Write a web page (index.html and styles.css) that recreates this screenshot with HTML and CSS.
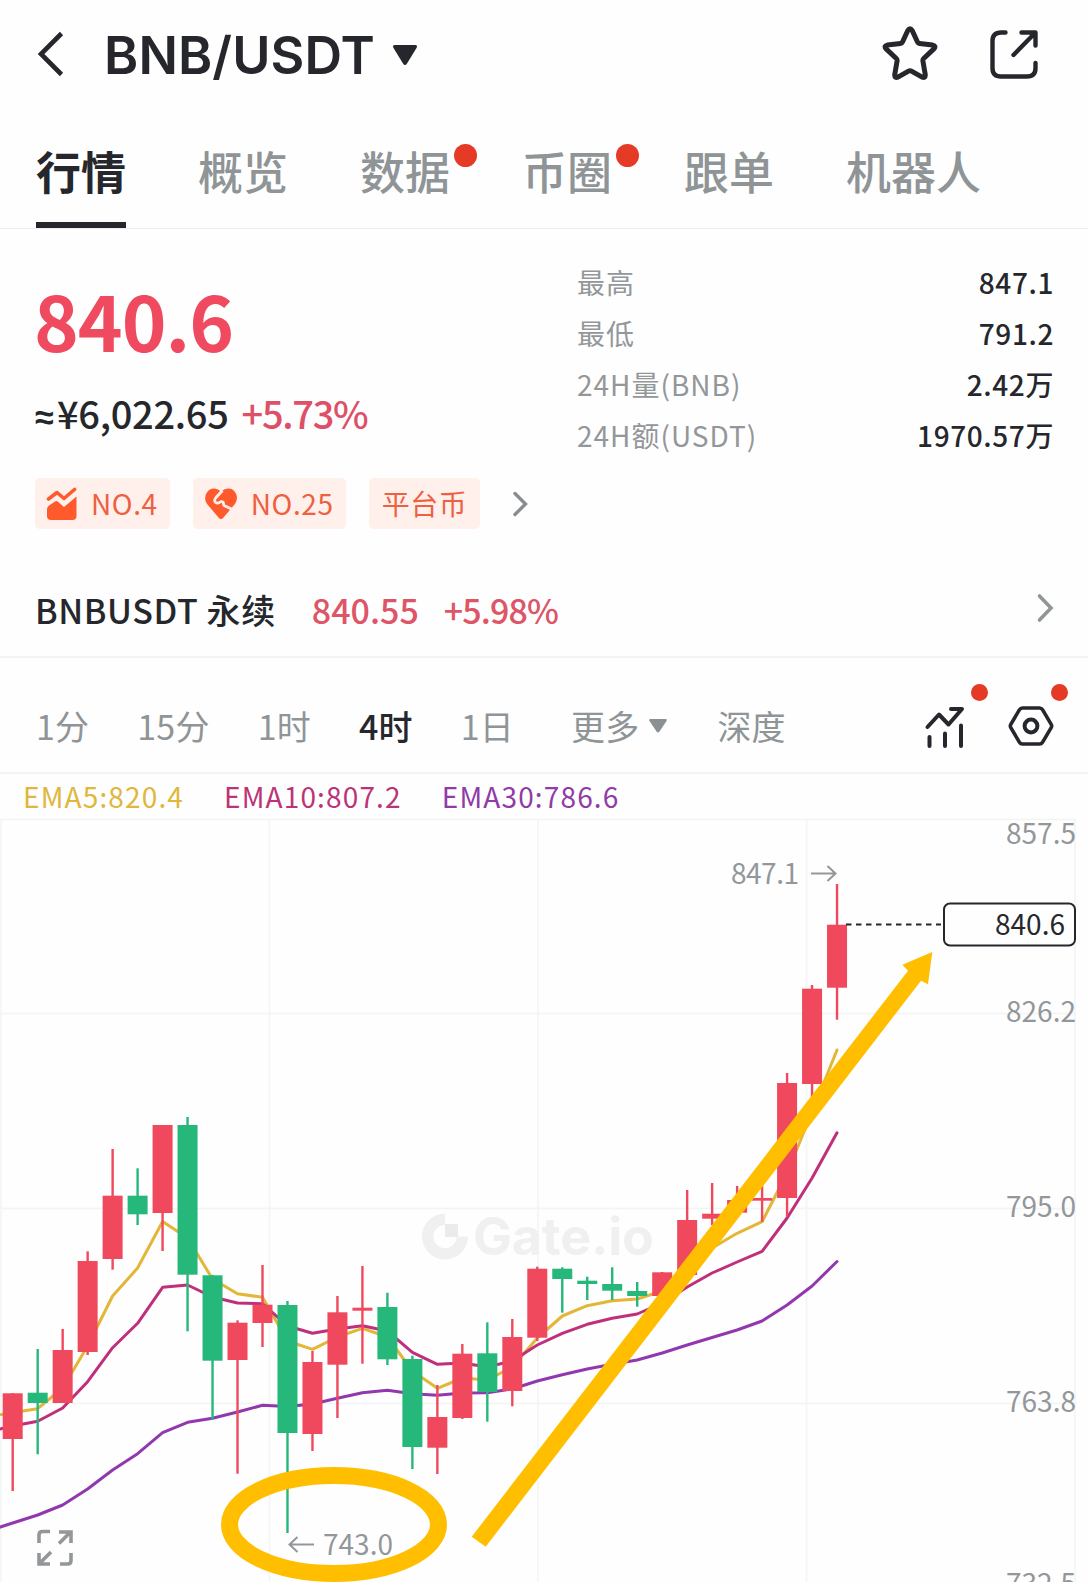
FILE: index.html
```html
<!DOCTYPE html>
<html lang="zh-CN">
<head>
    <meta charset="UTF-8">
    <meta name="viewport" content="width=device-width, initial-scale=1.0">
    <title>BNB/USDT</title>
    <link rel="stylesheet" href="styles.css">
</head>
<body>
    <header class="header">
        <svg class="back" width="28" height="46" viewBox="0 0 28 46" fill="none" stroke="#25272c" stroke-width="4.6"><path d="M24.500 2.500 4 23l20.500 20.500"/></svg>
        <h1>BNB/USDT</h1>
        <svg class="caret" width="24" height="20" viewBox="0 0 24 20" fill="#25272c"><path d="M2 0h20q3 0 1.500 3L14 18.500q-2 3-4 0L.5 3Q-1 0 2 0z"/></svg>
        <svg class="star" width="56" height="54" viewBox="0 0 56 54" fill="none" stroke="#25272c" stroke-width="5" stroke-linejoin="round"><path d="M25.800 4.500q2.200-3.400 4.400 0l5.300 11.500q.6 1.300 2 1.500l13.200 1.600q3.600.8 1.400 3.500l-10.400 9.900q-1 1-.8 2.400l2.400 14q0 3.300-3.200 2.200l-10.600-6q-1.500-.8-3 0l-10.600 6q-3.200 1.100-3.200-2.200l2.400-14q.2-1.400-.8-2.400L3.900 22.600q-2.200-2.700 1.400-3.500l13.200-1.600q1.400-.2 2-1.500z"/></svg>
        <svg class="share" width="50" height="50" viewBox="0 0 50 50" fill="none" stroke="#25272c" stroke-width="4.400" stroke-linecap="round" stroke-linejoin="round"><path d="M16.500 3.500H12q-8.500 0-8.500 8.500v27q0 8.500 8.500 8.500h26q8.500 0 8.500-8.500v-5M32.500 3.500h14v13M46 4 24.500 26"/></svg>
    </header>

    <nav class="tabs">
        <a class="tab active">行情</a>
        <a class="tab">概览</a>
        <a class="tab dot">数据</a>
        <a class="tab dot">币圈</a>
        <a class="tab">跟单</a>
        <a class="tab">机器人</a>
    </nav>

    <section class="summary">
        <div class="price-box">
            <div class="price">840.6</div>
            <div class="sub-price"><span class="cny"><span class="approx">≈</span>¥6,022.65</span><span class="up">+5.73%</span></div>
            <div class="badges">
                <span class="badge">
                    <svg width="32" height="34" viewBox="0 0 32 34" fill="#ff5a2c"><path d="M1 22q0-2 2-3.500l6-4q1.500-1 3 .3l6 5.200L30.500 9.500V29q0 4-4 4H5q-4 0-4-4z"/><path d="M2.500 13.500 11 7l7 6L29 3" fill="none" stroke="#fff0ec" stroke-width="6.500"/><path d="M2.500 12 11 5.500l7 6L28.500 2.500" fill="none" stroke="#ff5a2c" stroke-width="3.600" stroke-linecap="round" stroke-linejoin="round"/></svg>
                    NO.4
                </span>
                <span class="badge">
                    <svg width="34" height="32" viewBox="0 0 34 32"><path d="M17 3.500C22-.5 28-.5 31 4c3 4 2.300 9-.5 12.500L19.500 29.500q-2.500 3-5 0L3.500 16.500C.5 13 .5 8 3 4.500 6-.5 12-.5 17 3.500z" fill="#ff5a2c"/><path d="M18.500 2.500 12 9.500q-3 4 .5 5.500 2 .5 4.500-1.500l2 .5 1 3.500 7.500 3.500" fill="none" stroke="#fff0ec" stroke-width="2.800" stroke-linejoin="round"/></svg>
                    NO.25
                </span>
                <span class="badge badge-text">平台币</span>
                <svg class="more" width="18" height="28" viewBox="0 0 18 28" fill="none" stroke="#888d90" stroke-width="3.400" stroke-linecap="round"><path d="m4 3.500 10.500 10.500L4 24.500"/></svg>
            </div>
        </div>
        <dl class="stats">
            <dt>最高</dt><dd>847.1</dd>
            <dt>最低</dt><dd>791.2</dd>
            <dt>24H量(BNB)</dt><dd>2.42万</dd>
            <dt>24H额(USDT)</dt><dd>1970.57万</dd>
        </dl>
    </section>

    <section class="perp">
        <span class="perp-name">BNBUSDT 永续</span>
        <span class="perp-price">840.55</span>
        <span class="perp-rate">+5.98%</span>
        <svg width="18" height="30" viewBox="0 0 18 30" fill="none" stroke="#919598" stroke-width="3.600" stroke-linecap="round"><path d="m3.500 3 11.500 12L3.500 27"/></svg>
    </section>

    <nav class="periods">
        <a>1分</a>
        <a>15分</a>
        <a>1时</a>
        <a class="active">4时</a>
        <a class="day">1日</a>
        <a class="more-periods">更多<svg width="18" height="14" viewBox="0 0 18 14" fill="#8b9093"><path d="M1.500 0h15Q18.500 0 17.500 2L10.500 12.500q-1.500 2-3 0L.5 2Q-.5 0 1.500 0z"/></svg></a>
        <a>深度</a>
        <span class="tool tool-indicator">
            <svg width="42" height="44" viewBox="0 0 42 44" fill="none" stroke="#25272c" stroke-width="4" stroke-linecap="round" stroke-linejoin="round"><path d="m3.500 23 11.500-12.500 9.500 10L38 5H27M5.500 33v9M21 29.500V42M37 21.500V42"/></svg>
        </span>
        <span class="tool tool-setting">
            <svg width="46" height="42" viewBox="0 0 46 42" fill="none" stroke="#25272c" stroke-width="3.600" stroke-linejoin="round"><path d="M14.500 3h17q2 0 3 1.700l8.700 14.600q1 1.700 0 3.400l-8.700 14.600q-1 1.700-3 1.700h-17q-2 0-3-1.700L2.800 22.700q-1-1.700 0-3.400l8.700-14.600q1-1.700 3-1.700z"/><circle cx="23" cy="21" r="6.400" stroke-width="4"/></svg>
        </span>
    </nav>

    <div class="legend">
        <span class="ema5">EMA5:820.4</span>
        <span class="ema10">EMA10:807.2</span>
        <span class="ema30">EMA30:786.6</span>
    </div>

    <svg class="chart" id="chart" width="1088" height="763" viewBox="0 819 1088 763"></svg>

    <script src="chart.js"></script>
</body>
</html>
```
FILE: styles.css
```css
* {
    box-sizing: border-box;
}
body {
    margin: 0;
    width: 1088px;
    height: 1582px;
    overflow: hidden;
    background: #fefefe;
    color: #25272c;
    font-family: "Noto Sans CJK SC", sans-serif;
}
svg {
    display: block;
    flex: none;
}

/* header */
.header {
    height: 128px;
    padding: 0 49px 20px 37px;
    display: flex;
    align-items: center;
}
.header h1 {
    margin: 3px 0 0 39px;
    width: 272px;
    font-family: Inter, sans-serif;
    font-size: 52px;
    font-weight: 600;
    line-height: 60px;
    letter-spacing: 0.1px;
    white-space: nowrap;
}
.caret {
    margin: 1px 0 0 17px;
}
.star {
    margin: 0 0 3px auto;
}
.share {
    margin-left: 51px;
}

/* main tabs */
.tabs {
    display: flex;
    gap: 72px;
    height: 101px;
    padding-left: 36px;
    border-bottom: 1px solid #ededee;
}
.tab {
    position: relative;
    height: 100px;
    font-size: 45px;
    font-weight: 500;
    line-height: 86px;
    color: #8f9497;
}
.tab.active {
    color: #25272c;
    font-weight: 700;
    border-bottom: 6px solid #25272c;
}
.dot::after,
.tool::after {
    content: "";
    position: absolute;
    border-radius: 50%;
    background: #e43a26;
}
.dot::after {
    width: 23px;
    height: 23px;
    left: 94px;
    top: 16px;
}

/* price and 24h numbers */
.summary {
    display: flex;
    justify-content: space-between;
    height: 338px;
    padding: 0 35px;
}
.price {
    margin: 40px 0 0 -1px;
    font-size: 76px;
    font-weight: 700;
    line-height: 100px;
    letter-spacing: -1px;
    color: #ef4a60;
}
.sub-price {
    display: flex;
    gap: 13px;
    margin-top: 16px;
    font-size: 38px;
    font-weight: 500;
    line-height: 56px;
    letter-spacing: -0.3px;
}
.approx {
    display: inline-block;
    width: 22px;
    font-family: "Liberation Sans", sans-serif;
    font-size: 34px;
    font-weight: 700;
    line-height: 40px;
}
.up {
    color: #dd5068;
    letter-spacing: -1.3px;
}
.badges {
    display: flex;
    align-items: center;
    gap: 23px;
    margin-top: 37px;
}
.badge {
    display: flex;
    align-items: center;
    gap: 13px;
    height: 51px;
    padding: 0 12px 0 11px;
    border-radius: 5px;
    background: #fff0ec;
    color: #ee6040;
    font-size: 28px;
    line-height: 51px;
    letter-spacing: 0.6px;
}
.badge-text {
    padding: 0 13px;
}
.more {
    margin-left: 8px;
}
.stats {
    display: grid;
    grid-template-columns: auto auto;
    grid-auto-rows: 51px;
    width: 476px;
    margin: 28px 0 0;
    font-size: 28px;
    line-height: 51px;
}
.stats dt {
    color: #93979a;
    letter-spacing: 1px;
}
.stats dd {
    margin: 0 -1px 0 0;
    font-weight: 500;
    letter-spacing: 0.6px;
    text-align: right;
}

/* perpetual contract row */
.perp {
    display: flex;
    align-items: center;
    height: 91px;
    padding: 0 34px 3px 35px;
    border-bottom: 2px solid #f2f3f3;
    font-size: 34px;
    font-weight: 500;
    line-height: 50px;
    color: #25272c;
}
.perp-name {
    letter-spacing: 0.6px;
}
.perp-price,
.perp-rate {
    margin-left: 36px;
    color: #dd5566;
}
.perp-rate {
    margin-left: 25px;
    letter-spacing: -0.9px;
}
.perp svg {
    margin: 0 0 5px auto;
}

/* periods */
.periods {
    display: flex;
    align-items: center;
    gap: 48px;
    height: 116px;
    padding: 22px 34px 0 36px;
    border-bottom: 2px solid #f2f3f3;
    font-size: 34px;
    line-height: 50px;
    letter-spacing: 0.2px;
    color: #8f9497;
}
.periods .active {
    color: #25272c;
    font-weight: 500;
}
.more-periods {
    display: flex;
    align-items: center;
    gap: 10px;
    margin: 0 2px 0 9px;
}
.tool {
    position: relative;
}
.tool-indicator {
    margin-left: auto;
}
.tool-setting {
    margin-left: -6px;
}
.tool::after {
    width: 17px;
    height: 17px;
    right: -22px;
    top: -20px;
}
.tool-setting::after {
    right: -14px;
    top: -21px;
}

/* chart */
.legend {
    display: flex;
    gap: 40px;
    height: 45px;
    padding-left: 23px;
    font-size: 28px;
    line-height: 45px;
    letter-spacing: 1.15px;
}
.ema5 {
    color: #e0b73c;
}
.ema10 {
    color: #bd3377;
}
.ema30 {
    color: #913aa9;
}
.chart {
    overflow: visible;
}
.chart text {
    font-size: 28px;
    fill: #93979a;
}
.chart .tag-text {
    fill: #25272c;
}
.chart .watermark {
    font-family: Inter, sans-serif;
    font-size: 52px;
    font-weight: 700;
    fill: #f0f0f0;
}
```
FILE: chart.js
```js
const RED = '#f0495d';
const GREEN = '#26b87a';
const STEP = 24.98;
const X0 = 12.7;

// [top of body, bottom of body, high, low, colour]
const candles = [
    [1393.3, 1439, 1393, 1491, RED],
    [1392.7, 1403, 1349, 1454.3, GREEN],
    [1350, 1403, 1329, 1403, RED],
    [1261, 1352, 1251.3, 1355, RED],
    [1195.7, 1259, 1149, 1269.7, RED],
    [1195.7, 1214.3, 1168.3, 1225, GREEN],
    [1125, 1213, 1125, 1251, RED],
    [1125, 1274.7, 1117, 1331.3, GREEN],
    [1275.3, 1360.7, 1275, 1420, GREEN],
    [1322.7, 1360, 1320.3, 1473.7, RED],
    [1304.7, 1323, 1265, 1347, RED],
    [1305, 1433, 1301, 1533, GREEN],
    [1362, 1434, 1351, 1451, RED],
    [1312.3, 1364.7, 1296, 1418, RED],
    [1307.7, 1310.7, 1266, 1363.7, RED],
    [1307, 1359.3, 1292.7, 1365, GREEN],
    [1359, 1447, 1355.7, 1469, GREEN],
    [1417, 1447.7, 1385, 1474, RED],
    [1353.7, 1418, 1344, 1419, RED],
    [1353.3, 1392, 1322.3, 1421.7, GREEN],
    [1337, 1391, 1319, 1406.3, RED],
    [1268.7, 1337.7, 1266.7, 1341, RED],
    [1268.7, 1279, 1267.3, 1312.7, GREEN],
    [1280.7, 1284, 1276.7, 1300, GREEN],
    [1284, 1290.7, 1267.3, 1300, GREEN],
    [1291, 1296, 1282, 1306.7, GREEN],
    [1272.3, 1296, 1272, 1296, RED],
    [1220, 1275, 1190, 1275, RED],
    [1213.7, 1218.7, 1183, 1225, RED],
    [1200, 1212.7, 1186, 1213, RED],
    [1198, 1200.7, 1186, 1221.7, RED],
    [1083, 1198, 1073, 1216.7, RED],
    [988.7, 1084, 985, 1097, RED],
    [924.7, 987.7, 884, 1019.7, RED]
];

// first point sits one step left of the first candle
const ema = {
    '#e3b638': [1417, 1412.5, 1408.7, 1388, 1346, 1296, 1268, 1221.5, 1238, 1279, 1293.7, 1297.3, 1341, 1349.3, 1337, 1328.3, 1337, 1371, 1388.3, 1378, 1380, 1367, 1338, 1316, 1305.7, 1300.7, 1299, 1291, 1272, 1248, 1233.3, 1221.7, 1173, 1112, 1050],
    '#c02f7b': [1432, 1426, 1421.3, 1408, 1381.7, 1347.7, 1323.3, 1287.3, 1285, 1297, 1303, 1303.7, 1326, 1333.3, 1329, 1325.7, 1331, 1352.3, 1364.3, 1363, 1367, 1361, 1345, 1333.3, 1324.3, 1318.3, 1314, 1303, 1287, 1273, 1262, 1251.3, 1218, 1178, 1132.7],
    '#9238ae': [1531, 1523, 1515, 1505, 1489, 1470, 1453.7, 1432.7, 1422.3, 1418.3, 1412, 1405.3, 1406.5, 1404, 1398.3, 1392.7, 1390.3, 1393.7, 1395.3, 1393, 1392.7, 1389, 1381, 1374.7, 1369, 1364.3, 1360, 1353, 1345, 1337.5, 1330, 1321, 1305, 1286, 1261.5]
};

let out = '';

// grid
for (const x of [1, 269.5, 538, 806.5, 1075]) {
    out += `<path d="M${x} 819V1582" stroke="#f5f6f6" stroke-width="2"/>`;
}
for (const y of [819.5, 1013.5, 1208.5, 1403.5]) {
    out += `<path d="M0 ${y}H1075" stroke="#f3f4f4" stroke-width="1.500"/>`;
}

// watermark
out += `<path d="M445 1213.500a23 23 0 1 0 23 23h-11.500a11.500 11.500 0 1 1-11.500-11.500z" fill="#f0f0f0"/>
    <rect x="445" y="1224" width="13" height="13" fill="#ebebeb"/>
    <text class="watermark" x="473" y="1255" textLength="181">Gate.io</text>`;

for (const color in ema) {
    const points = ema[color].map((y, i) => `${(X0 + (i - 1) * STEP).toFixed(1)},${y}`).join(' ');
    out += `<polyline points="${points}" fill="none" stroke="${color}" stroke-width="3" stroke-linecap="round" stroke-linejoin="round"/>`;
}

candles.forEach(([top, bottom, high, low, color], i) => {
    const x = X0 + i * STEP;
    out += `<path d="M${x} ${high}V${low}" stroke="${color}" stroke-width="2.400"/>`;
    out += `<rect x="${x - 10}" y="${top}" width="20" height="${bottom - top}" fill="${color}"/>`;
});

// price axis
for (const [y, label] of [[844, '857.5'], [1021.5, '826.2'], [1216.5, '795.0'], [1411.5, '763.8'], [1594, '732.5']]) {
    out += `<text x="1006" y="${y}" textLength="70">${label}</text>`;
}

// high and low marks
out += `<text x="731" y="883.500" textLength="68">847.1</text>
    <path d="M811 873.500H835M827.500 866l8 7.500-8 7.500" fill="none" stroke="#93979a" stroke-width="2"/>
    <text x="323" y="1555" textLength="70">743.0</text>
    <path d="M314 1544.500H290M297.500 1537l-8 7.500 8 7.500" fill="none" stroke="#93979a" stroke-width="2"/>`;

// last price
out += `<path d="M846 924.500H941" stroke="#25272c" stroke-width="2" stroke-dasharray="5.500 4.500"/>
    <rect x="944" y="903.500" width="131" height="42" rx="6" fill="#fefefe" stroke="#25272c" stroke-width="2"/>
    <text class="tag-text" x="995" y="934.500" textLength="70">840.6</text>`;

// fullscreen button
out += `<path d="M39 1543v-8q0-3.500 3.500-3.500H50M59 1543.500l11.500-11.500M59 1532h12v11M39 1553v11h11M39.500 1563.500 51 1552M71 1553v7.500q0 3.500-3.500 3.500H60" fill="none" stroke="#93979a" stroke-width="3.600"/>`;

// hand drawn marks
out += `<ellipse cx="334" cy="1524.500" rx="104.500" ry="49" fill="none" stroke="#ffbf00" stroke-width="17"/>
    <path d="M471.700 1536.700 908 970.700 902.300 964.700 932.300 952 928 984.300 921 980.700 485.700 1546.700z" fill="#ffbf00"/>`;

document.getElementById('chart').innerHTML = out;
```
